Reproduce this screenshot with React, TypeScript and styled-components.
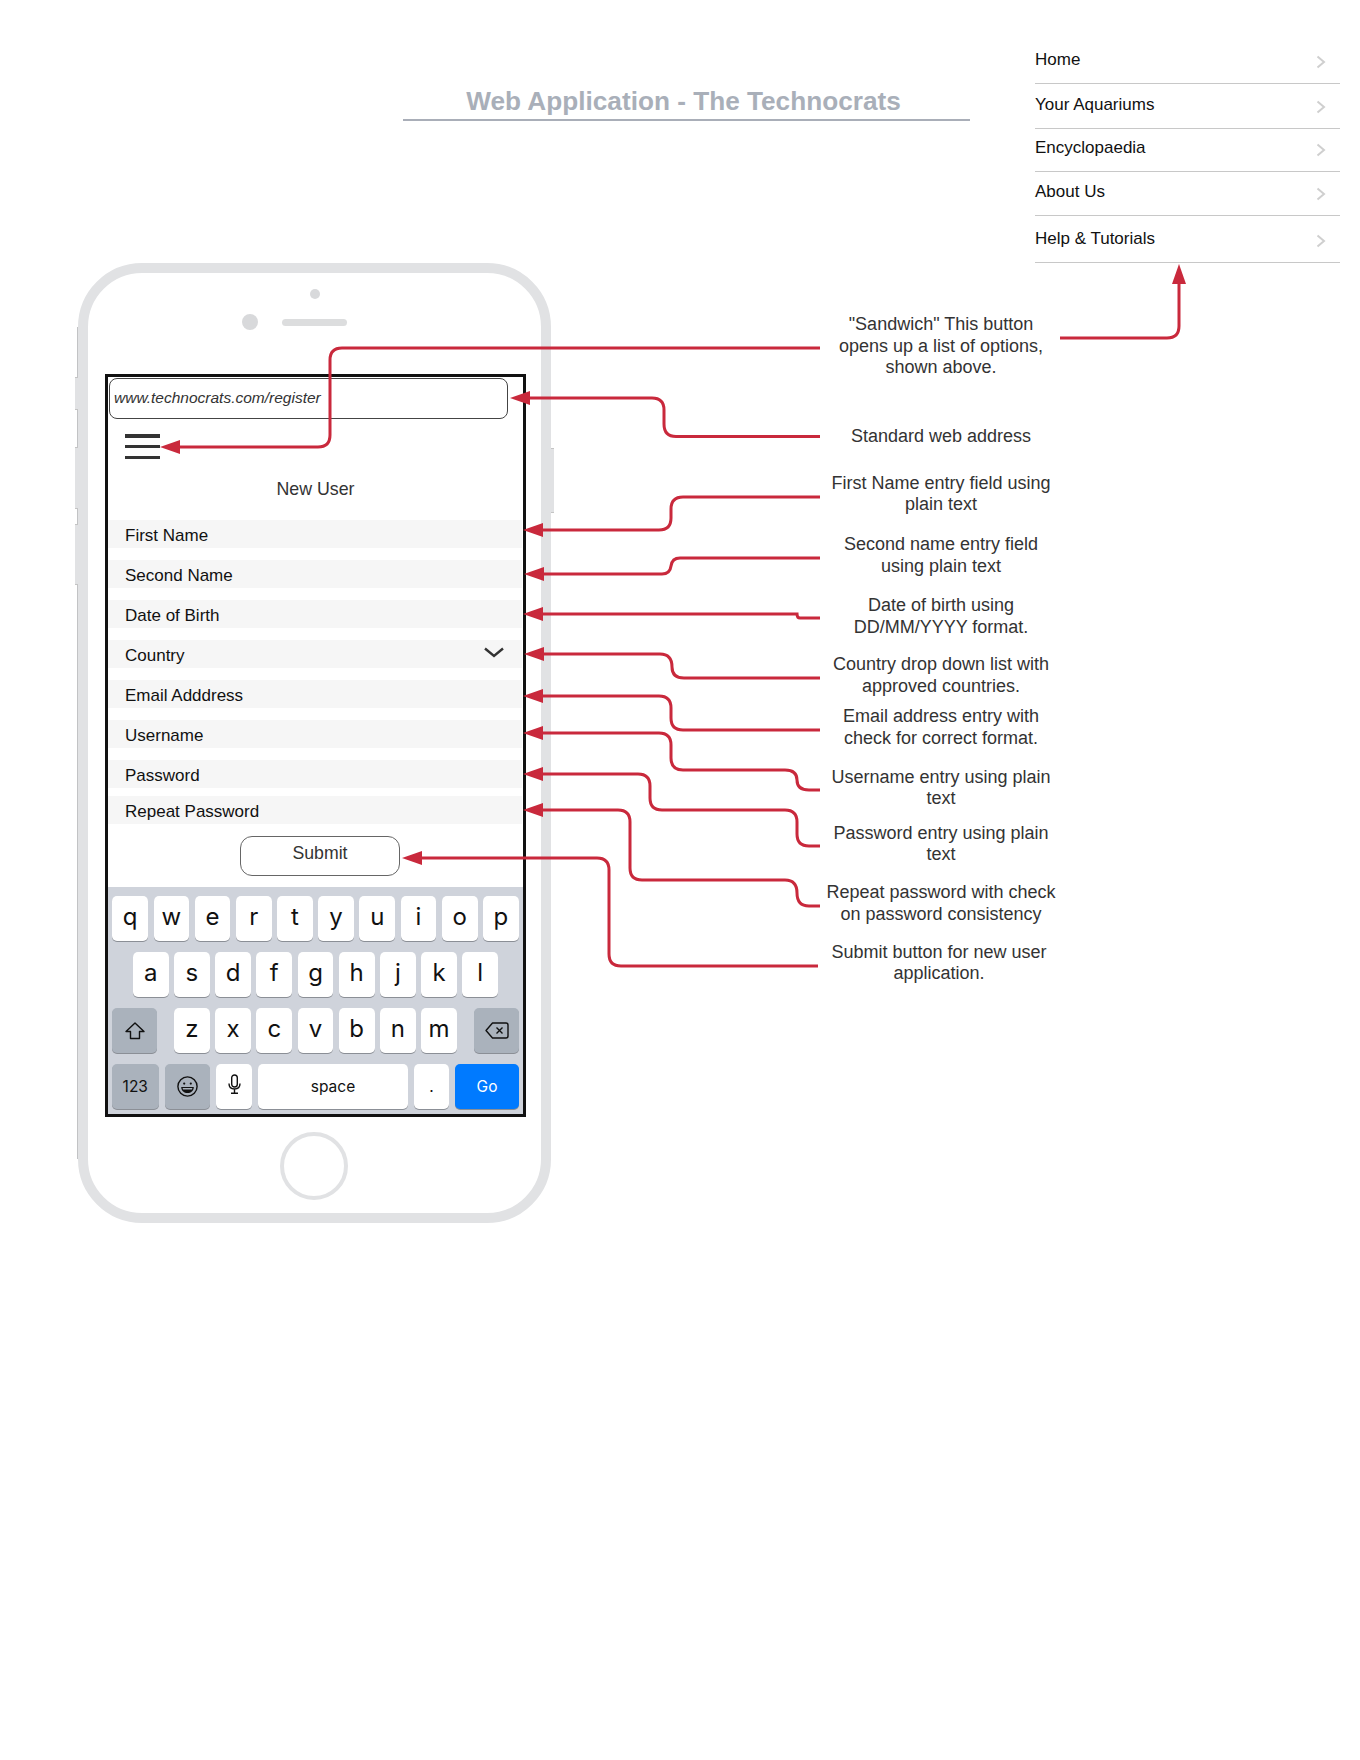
import styled, { createGlobalStyle } from "styled-components";

const GlobalStyle = createGlobalStyle`
  body {
    margin: 0;
    background: #ffffff;
    font-family: "Liberation Sans", Arial, sans-serif;
  }
`;

const Page = styled.div`
  position: relative;
  width: 1360px;
  height: 1760px;
  padding-top: 38px;
  box-sizing: border-box;
  overflow: hidden;
`;

const Header = styled.header`
  display: flex;
  align-items: flex-start;
  padding-left: 403px;
`;

const Title = styled.h1`
  width: 567px;
  margin: 48px 0 0;
  padding: 0 6px 3px 0;
  box-sizing: border-box;
  border-bottom: 2px solid #a9aeb8;
  color: #a9afb9;
  font-size: 26.2px;
  font-weight: 700;
  line-height: 30px;
  text-align: center;
`;

const Menu = styled.nav`
  display: flex;
  flex-direction: column;
  width: 305px;
  margin-left: 65px;
`;

const MenuRow = styled.div<{ $height: number }>`
  display: flex;
  align-items: flex-end;
  justify-content: space-between;
  height: ${(p) => p.$height}px;
  padding: 0 14px 13px 0;
  box-sizing: border-box;
  border-bottom: 1px solid #c8c8c8;
  color: #111;
  font-size: 17px;
  line-height: 20px;
`;

const MenuChevron = styled.svg`
  width: 10px;
  height: 14px;
  margin-bottom: 1px;
  fill: none;
  stroke: #cfcfcf;
  stroke-width: 2;
`;

const Body = styled.main`
  display: flex;
  align-items: flex-start;
  padding-left: 78px;
`;

const Phone = styled.div`
  position: relative;
  display: flex;
  flex-direction: column;
  align-items: center;
  width: 473px;
  height: 960px;
  box-sizing: border-box;
  border: 10px solid #e1e2e4;
  border-radius: 64px;
  background: #fff;
`;

const SideTab = styled.span<{ $side: "left" | "right"; $top: number; $height: number }>`
  position: absolute;
  top: ${(p) => p.$top}px;
  ${(p) => p.$side}: -13px;
  width: 3px;
  height: ${(p) => p.$height}px;
  background: #e1e2e4;
  border-top: 1px solid #c4c4c4;
  border-bottom: 1px solid #c4c4c4;
`;

const SideEdge = styled.span`
  position: absolute;
  top: 54px;
  bottom: 54px;
  left: -11px;
  width: 1px;
  background: #c2c3c5;
`;

const CameraDot = styled.span`
  width: 10px;
  height: 10px;
  margin-top: 16px;
  border-radius: 50%;
  background: #d8d9db;
`;

const Sensors = styled.div`
  display: grid;
  grid-template-columns: 1fr 65px 1fr;
  align-items: center;
  width: 100%;
  height: 16px;
  margin-top: 15px;
`;

const FrontLens = styled.span`
  justify-self: end;
  width: 16px;
  height: 16px;
  margin-right: 24px;
  border-radius: 50%;
  background: #d8d9db;
`;

const Speaker = styled.span`
  height: 7px;
  border-radius: 4px;
  background: #dcddde;
`;

const Screen = styled.div`
  display: flex;
  flex-direction: column;
  flex: none;
  width: 421px;
  height: 743px;
  margin: 44px 0 0 2px;
  box-sizing: border-box;
  border: 3px solid #111;
`;

const UrlBar = styled.div`
  width: 399px;
  height: 41px;
  margin: 1px 0 0 1px;
  padding-left: 4px;
  box-sizing: border-box;
  border: 1px solid #444;
  border-radius: 8px;
  color: #333;
  font-size: 15.5px;
  font-style: italic;
  line-height: 37px;
`;

const Burger = styled.div`
  display: flex;
  flex-direction: column;
  justify-content: space-between;
  width: 35px;
  height: 25px;
  margin: 15px 0 0 17px;

  > span {
    height: 3.5px;
    background: #333;
  }
`;

const ScreenTitle = styled.div`
  height: 22px;
  margin-top: 19px;
  margin-bottom: -1px;
  color: #333;
  font-size: 17.8px;
  line-height: 22px;
  text-align: center;
`;

const Form = styled.div`
  display: flex;
  flex-direction: column;
  gap: 12px;
  width: 414px;
  margin-top: 21px;
`;

const Field = styled.div<{ $tight?: boolean }>`
  display: flex;
  align-items: center;
  justify-content: space-between;
  height: 28px;
  margin-top: ${(p) => (p.$tight ? "-4px" : "0")};
  padding: 3px 18px 0 17px;
  box-sizing: border-box;
  background: #f6f6f6;
  color: #111;
  font-size: 17px;
`;

const SelectChevron = styled.svg`
  width: 20px;
  height: 11px;
  margin-top: -6px;
  fill: none;
  stroke: #333;
  stroke-width: 2.4;
`;

const SubmitButton = styled.button`
  display: block;
  width: 160px;
  height: 40px;
  margin: 12px 0 0 132px;
  padding: 0 0 6px;
  box-sizing: border-box;
  border: 1.3px solid #666;
  border-radius: 12px;
  background: #fff;
  color: #333;
  font-family: inherit;
  font-size: 17.7px;
`;

const Keyboard = styled.div`
  display: flex;
  flex-direction: column;
  gap: 11px;
  flex: 1;
  margin-top: 11px;
  padding: 9px 4px 0;
  box-sizing: border-box;
  background: #cfd3db;
  font-family: Inter, "Liberation Sans", sans-serif;
`;

const KeyRow = styled.div<{ $split?: boolean }>`
  display: flex;
  justify-content: ${(p) => (p.$split ? "space-between" : "center")};
  gap: 5.5px;
`;

const KeyGroup = styled.div`
  display: flex;
  gap: 5.5px;
`;

const Key = styled.div<{ $width?: number; $tone?: "gray" | "blue"; $small?: boolean }>`
  display: flex;
  align-items: center;
  justify-content: center;
  flex: none;
  width: ${(p) => p.$width ?? 35.7}px;
  height: 45px;
  padding-bottom: ${(p) => (p.$small || p.$tone ? "0" : "5px")};
  box-sizing: border-box;
  border-radius: 5px;
  box-shadow: 0 1px 0 #8b8f96;
  background: ${(p) => (p.$tone === "gray" ? "#aab2bc" : p.$tone === "blue" ? "#007aff" : "#fff")};
  color: ${(p) => (p.$tone === "blue" ? "#fff" : "#111")};
  font-size: ${(p) => (p.$small ? "15.5px" : "24px")};
  font-weight: 400;
`;

const KeyIcon = styled.svg`
  fill: none;
  stroke: #111;
  stroke-width: 1.4;
`;

const HomeButton = styled.span`
  flex: none;
  width: 68px;
  height: 68px;
  margin: 15px 2px 0 0;
  box-sizing: border-box;
  border: 4px solid #e1e2e4;
  border-radius: 50%;
`;

const Notes = styled.div`
  display: flex;
  flex-direction: column;
  width: 240px;
  margin-left: 270px;
  padding-top: 51px;
`;

const Note = styled.p<{ $gap: number; $shift?: number }>`
  margin: ${(p) => p.$gap}px 0 0;
  padding-right: ${(p) => p.$shift ?? 0}px;
  color: #333;
  font-size: 18px;
  line-height: 21.5px;
  text-align: center;
`;

const Arrows = styled.svg`
  position: absolute;
  top: 0;
  left: 0;
  width: 1360px;
  height: 1760px;
  pointer-events: none;
`;

const menuItems = [
  { label: "Home", height: 46 },
  { label: "Your Aquariums", height: 45 },
  { label: "Encyclopaedia", height: 43 },
  { label: "About Us", height: 44 },
  { label: "Help & Tutorials", height: 47 },
];

const fields = ["First Name", "Second Name", "Date of Birth", "Country", "Email Adddress", "Username", "Password", "Repeat Password"];

const notes = [
  { gap: 0, lines: ['"Sandwich" This button', "opens up a list of options,", "shown above."] },
  { gap: 47, lines: ["Standard web address"] },
  { gap: 25.5, lines: ["First Name entry field using", "plain text"] },
  { gap: 18.5, lines: ["Second name entry field", "using plain text"] },
  { gap: 18, lines: ["Date of birth using", "DD/MM/YYYY format."] },
  { gap: 16, lines: ["Country drop down list with", "approved countries."] },
  { gap: 9, lines: ["Email address entry with", "check for correct format."] },
  { gap: 17.5, lines: ["Username entry using plain", "text"] },
  { gap: 13, lines: ["Password entry using plain", "text"] },
  { gap: 16.5, lines: ["Repeat password with check", "on password consistency"] },
  { gap: 16.5, lines: ["Submit button for new user", "application."], shift: 4 },
];

// leader lines, in page coordinates; each ends in a head pointing at `tip`
const leaders = [
  { d: "M820 348H342Q330 348 330 360V435Q330 447 318 447H178", tip: [160, 447] },
  { d: "M820 436.5H676Q664 436.5 664 424V410Q664 398 652 398H528", tip: [510, 398] },
  { d: "M820 497H683Q671 497 671 509V518Q671 530 659 530H541", tip: [523, 530] },
  { d: "M820 558H680Q672 558 671 566Q670 574 662 574H542", tip: [524, 574] },
  { d: "M820 618H800Q797 618 797 614H541", tip: [523, 614] },
  { d: "M820 678H684Q672 678 672 667Q672 654 660 654H542", tip: [524, 654] },
  { d: "M820 730H683Q671 730 671 718V708Q671 696 659 696H541", tip: [523, 696] },
  { d: "M820 790H809Q797 790 797 780Q797 770 785 770H683Q671 770 671 758V745Q671 733 659 733H541", tip: [523, 733] },
  { d: "M820 846H809Q797 846 797 834V822Q797 810 785 810H662Q650 810 650 798V786Q650 774 638 774H541", tip: [523, 774] },
  { d: "M820 906H809Q797 906 797 893Q797 880 785 880H642Q630 880 630 868V822Q630 810 618 810H541", tip: [523, 810] },
  { d: "M818 966H621Q609 966 609 954V870Q609 858 597 858H420", tip: [402, 858] },
];

function ShiftIcon() {
  return (
    <KeyIcon width="20" height="18" viewBox="0 0 20 18">
      <path d="M10 1L19 9.5H14.5V16.5H5.5V9.5H1Z" strokeLinejoin="round" />
    </KeyIcon>
  );
}

function DeleteIcon() {
  return (
    <KeyIcon width="24" height="17" viewBox="0 0 24 17">
      <path d="M7.5 1H21a2 2 0 0 1 2 2V14a2 2 0 0 1-2 2H7.5L1 8.5Z" strokeLinejoin="round" />
      <path d="M11.5 5.5L17.5 11.5M17.5 5.5L11.5 11.5" />
    </KeyIcon>
  );
}

function EmojiIcon() {
  return (
    <KeyIcon width="21" height="21" viewBox="0 0 21 21">
      <circle cx="10.5" cy="10.5" r="9.6" />
      <circle cx="7.2" cy="7.6" r="1.1" fill="#111" stroke="none" />
      <circle cx="13.8" cy="7.6" r="1.1" fill="#111" stroke="none" />
      <path d="M4.2 11H16.8C16.6 15 13.8 17 10.5 17S4.4 15 4.2 11Z" fill="#111" stroke="none" />
      <path d="M5.6 12H15.4L15 13.4H6Z" fill="#aab2bc" stroke="none" />
    </KeyIcon>
  );
}

function MicIcon() {
  return (
    <KeyIcon width="13" height="20" viewBox="0 0 13 20">
      <rect x="3.7" y="1" width="5.6" height="12" rx="2.8" />
      <path d="M1 9.5C1 12.8 3.2 15 6.5 15S12 12.8 12 9.5M6.5 15V19M3 19.3H10" />
    </KeyIcon>
  );
}

function App() {
  return (
    <Page>
      <GlobalStyle />
      <Header>
        <Title>Web Application - The Technocrats</Title>
        <Menu>
          {menuItems.map((item) => (
            <MenuRow key={item.label} $height={item.height}>
              {item.label}
              <MenuChevron viewBox="0 0 10 14">
                <path d="M1.5 1.5L8 7L1.5 12.5" />
              </MenuChevron>
            </MenuRow>
          ))}
        </Menu>
      </Header>
      <Body>
        <Phone>
          <SideEdge />
          <SideTab $side="left" $top={104} $height={31} />
          <SideTab $side="left" $top={174} $height={60} />
          <SideTab $side="left" $top={251} $height={59} />
          <SideTab $side="right" $top={175} $height={63} />
          <CameraDot />
          <Sensors>
            <FrontLens />
            <Speaker />
          </Sensors>
          <Screen>
            <UrlBar>www.technocrats.com/register</UrlBar>
            <Burger>
              <span />
              <span />
              <span />
            </Burger>
            <ScreenTitle>New User</ScreenTitle>
            <Form>
              {fields.map((field) => (
                <Field key={field} $tight={field === "Repeat Password"}>
                  {field}
                  {field === "Country" && (
                    <SelectChevron viewBox="0 0 20 11">
                      <path d="M1 1.5L10 9L19 1.5" />
                    </SelectChevron>
                  )}
                </Field>
              ))}
            </Form>
            <SubmitButton>Submit</SubmitButton>
            <Keyboard>
              <KeyRow>
                {"qwertyuiop".split("").map((k) => (
                  <Key key={k}>{k}</Key>
                ))}
              </KeyRow>
              <KeyRow>
                {"asdfghjkl".split("").map((k) => (
                  <Key key={k}>{k}</Key>
                ))}
              </KeyRow>
              <KeyRow $split>
                <Key $width={45} $tone="gray">
                  <ShiftIcon />
                </Key>
                <KeyGroup>
                  {"zxcvbnm".split("").map((k) => (
                    <Key key={k}>{k}</Key>
                  ))}
                </KeyGroup>
                <Key $width={45} $tone="gray">
                  <DeleteIcon />
                </Key>
              </KeyRow>
              <KeyRow $split>
                <Key $width={46.5} $tone="gray" $small>
                  123
                </Key>
                <Key $width={45.5} $tone="gray">
                  <EmojiIcon />
                </Key>
                <Key $width={36}>
                  <MicIcon />
                </Key>
                <Key $width={150} $small>
                  space
                </Key>
                <Key $width={35} $small>
                  .
                </Key>
                <Key $width={64} $tone="blue" $small>
                  Go
                </Key>
              </KeyRow>
            </Keyboard>
          </Screen>
          <HomeButton />
        </Phone>
        <Notes>
          {notes.map((note) => (
            <Note key={note.lines[0]} $gap={note.gap} $shift={note.shift}>
              {note.lines.map((line) => (
                <span key={line}>
                  {line}
                  <br />
                </span>
              ))}
            </Note>
          ))}
        </Notes>
      </Body>
      <Arrows viewBox="0 0 1360 1760">
        {leaders.map((leader) => (
          <g key={leader.d}>
            <path d={leader.d} fill="none" stroke="#c9293c" strokeWidth="3" />
            <polygon
              points={`${leader.tip[0]},${leader.tip[1]} ${leader.tip[0] + 20},${leader.tip[1] - 7} ${leader.tip[0] + 20},${leader.tip[1] + 7}`}
              fill="#c9293c"
            />
          </g>
        ))}
        <path d="M1060 338H1167Q1179 338 1179 326V282" fill="none" stroke="#c9293c" strokeWidth="3" />
        <polygon points="1179,264 1172,284 1186,284" fill="#c9293c" />
      </Arrows>
    </Page>
  );
}

export default App;
